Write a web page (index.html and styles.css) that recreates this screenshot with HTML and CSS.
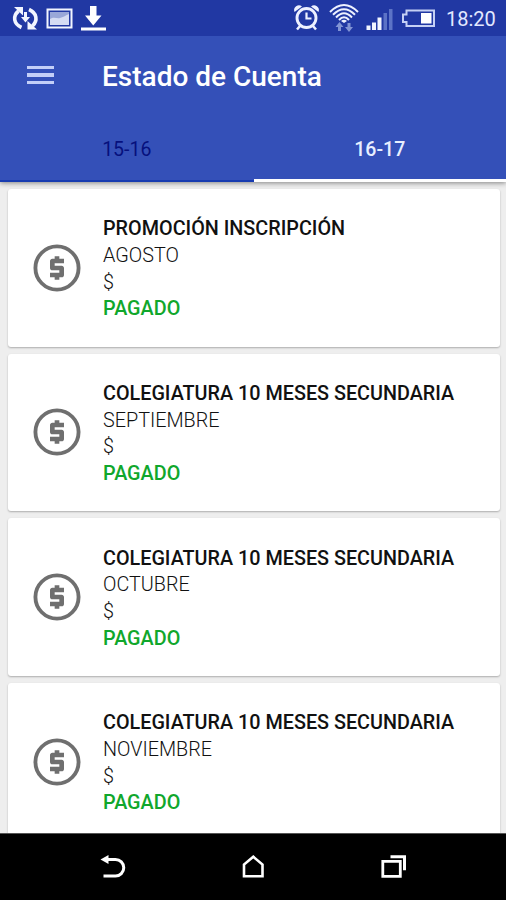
FILE: index.html
```html
<!DOCTYPE html>
<html lang="es">
<head>
<meta charset="utf-8">
<title>Estado de Cuenta</title>
<link rel="stylesheet" href="styles.css">
</head>
<body>
<div class="screen">
  <header class="header">
    <div class="status">
      <svg class="status-left" width="110" height="36" viewBox="0 0 110 36" fill="none" stroke="#f2f5ff">
        <path d="M21.500 27.500C13.500 24 12.500 16 18.500 11M29 9.500C37 13 38 20.500 32.500 26" stroke-width="3.600"/>
        <path d="M14 7h9v8.500zM37 29.500h-9.500v-8.500z" fill="#f2f5ff" stroke="none"/>
        <path d="M25.500 12v6" stroke-width="3"/><path d="M21 17h9l-4.500 5.500z" fill="#f2f5ff" stroke="none"/>
        <path d="M47.500 9.500h24v18h-24z" stroke-width="2"/>
        <path d="M50 12h19v13h-19z" fill="#99a7d8" stroke="none"/>
        <path d="M50 19c4-3 7 0 10-1s5-2 9-4v11h-19z" fill="#d5dcf3" stroke="none"/>
        <path d="M90 6h6.500v9.500h5l-8.250 10-8.250-10h5zM81 27.500h25v3h-25z" fill="#fff" stroke="none"/>
      </svg>
      <svg class="status-right" width="146" height="36" viewBox="292 0 146 36" fill="none" stroke="#edf1ff">
        <circle cx="306.500" cy="18" r="9.500" stroke-width="2.900"/>
        <path d="M306.500 12.500v6h5" stroke-width="2.200"/>
        <path d="M300 26l-3 3.500M313 26l3 3.500" stroke-width="2.500"/>
        <path d="M294.500 12a4.800 4.800 0 0 1 7.500-5.500zM318.500 12a4.800 4.800 0 0 0-7.500-5.500z" fill="#edf1ff" stroke="none"/>
        <path d="M330 12Q344 -2 358 12M333 14.800Q344 3.500 355 14.800M336 17.500Q344 9 352 17.500M339 20Q344 14.500 349 20" stroke-width="2"/>
        <path d="M341 21Q344 18.500 347 21l-3 2z" fill="#edf1ff" stroke="none"/>
        <path d="M335.500 27l4-5 4 5h-2.500v4h-3v-4zM345 27l4 5 4-5h-2.500v-4h-3v4z" fill="#8294d4" stroke="none"/>
        <path d="M366.500 25.500h4v4.500h-4zM372 22.500h4v7.500h-4zM377.500 17.500h4v12.500h-4z" fill="#f2f5ff" stroke="none"/>
        <path d="M383.500 13h3.500v17h-3.500zM389 9h3.500v21h-3.500z" fill="#5c73c6" stroke="none"/>
        <path d="M406.500 10.500h27.500v15.500h-27.500v-4h-3.500v-7.500h3.500z" stroke="#c5d0f4" stroke-width="2"/>
        <path d="M421 13h10.500v10.500h-10.500z" fill="#fff" stroke="none"/>
      </svg>
      <span class="clock">18:20</span>
    </div>
    <div class="toolbar">
      <span class="menu"><i></i><i></i><i></i></span>
      <h1>Estado de Cuenta</h1>
    </div>
    <nav class="tabs"><span class="tab">15-16</span><span class="tab active">16-17</span></nav>
  </header>
  <main class="list">
    <article class="card">
      <svg class="coin" viewBox="0 0 24 24"><use href="#coin"/></svg>
      <div class="info"><strong class="concept">PROMOCIÓN INSCRIPCIÓN</strong><span class="light">AGOSTO</span><span class="light">$</span><span class="paid">PAGADO</span></div>
    </article>
    <article class="card">
      <svg class="coin" viewBox="0 0 24 24"><use href="#coin"/></svg>
      <div class="info"><strong class="concept">COLEGIATURA 10 MESES SECUNDARIA</strong><span class="light">SEPTIEMBRE</span><span class="light">$</span><span class="paid">PAGADO</span></div>
    </article>
    <article class="card">
      <svg class="coin" viewBox="0 0 24 24"><use href="#coin"/></svg>
      <div class="info"><strong class="concept">COLEGIATURA 10 MESES SECUNDARIA</strong><span class="light">OCTUBRE</span><span class="light">$</span><span class="paid">PAGADO</span></div>
    </article>
    <article class="card">
      <svg class="coin" viewBox="0 0 24 24"><use href="#coin"/></svg>
      <div class="info"><strong class="concept">COLEGIATURA 10 MESES SECUNDARIA</strong><span class="light">NOVIEMBRE</span><span class="light">$</span><span class="paid">PAGADO</span></div>
    </article>
  </main>
  <footer class="navbar">
    <svg width="28" height="28" viewBox="0 0 28 28"><path d="M8 6.500h8.500a8.250 8.250 0 0 1 0 16.500H4.500" fill="none" stroke="#fff" stroke-width="3"/><path d="M1.500 6.500 9.500 2v9z" fill="#fff"/></svg>
    <svg width="28" height="28" viewBox="0 0 28 28"><path d="M5 23.300V11.500L14.300 3.800 23.500 11.500v11.800z" fill="none" stroke="#fff" stroke-width="2.600"/></svg>
    <svg width="28" height="28" viewBox="0 0 28 28" fill="none" stroke="#fff"><path d="M3.800 8.300h17.500v15h-17.500z" stroke-width="2.800"/><path d="M11.500 3.800h14v13.500" stroke-width="3"/></svg>
  </footer>
</div>
<svg class="defs" width="0" height="0"><defs><g id="coin"><circle cx="12" cy="12" r="9.250" fill="none" stroke="#6f6f6f" stroke-width="1.650"/><path fill="#6f6f6f" d="M11 17h2v-1h1c.55 0 1-.45 1-1v-3c0-.55-.45-1-1-1h-3v-1h4V8h-2V7h-2v1h-1c-.55 0-1 .45-1 1v3c0 .55.45 1 1 1h3v1H9v2h2v1z"/></g></defs></svg>
</body>
</html>
```
FILE: styles.css
```css
* { box-sizing: border-box; }
body { margin: 0; font-family: Roboto, sans-serif; }
.screen { width: 506px; height: 900px; overflow: hidden; display: flex; flex-direction: column; background: #eee; }
.header { position: relative; height: 182px; flex: none; background: #3450b8; box-shadow: 0 1px 5px rgba(0,0,0,.45); }
.status { height: 36px; background: #2138a3; display: flex; align-items: center; }
.status-left { flex: none; }
.status-right { margin-left: 182px; flex: none; }
.clock { margin-left: 8px; color: #e3e9ff; font-size: 20px; line-height: 36px; padding-top: 2px; }
.toolbar { height: 80px; display: flex; align-items: center; padding-left: 27px; }
.menu { width: 26.500px; display: grid; gap: 4px; margin-top: -2px; }
.menu i { height: 3.500px; background: #c3cff8; }
h1 { margin: 2px 0 0 48.500px; color: #fff; font-size: 28px; font-weight: 500; line-height: 36px; white-space: nowrap; }
.tabs { height: 66px; display: grid; grid-template-columns: 253.500px 1fr; }
.tab { height: 66px; text-align: center; line-height: 68px; font-size: 19.500px; font-weight: 400; color: #06107d; border-bottom: 2px solid #173bb0; }
.tab.active { font-weight: 500; color: #e8efff; border-bottom: 3px solid #fff; }
.list { height: 651px; overflow: hidden; padding: 7px 6.500px 0 8px; display: flex; flex-direction: column; gap: 7px; }
.card { flex: none; height: 157.600px; padding-left: 21px; background: #fff; border-radius: 3px; box-shadow: 0 1px 2px rgba(0,0,0,.28); display: flex; align-items: center; }
.coin { width: 56px; height: 56px; flex: none; }
.info { margin: 4px 0 0 18px; display: grid; grid-auto-rows: 26.700px; line-height: 26.700px; font-size: 19.800px; white-space: nowrap; color: #111; }
.concept, .paid { font-weight: 500; }
.light { font-weight: 300; }
.paid { color: #10a72c; }
.navbar { height: 67px; flex: none; background: #000; border-top: 1px solid #555; display: flex; justify-content: center; align-items: center; gap: 112px; }
.defs { display: block; }
```
